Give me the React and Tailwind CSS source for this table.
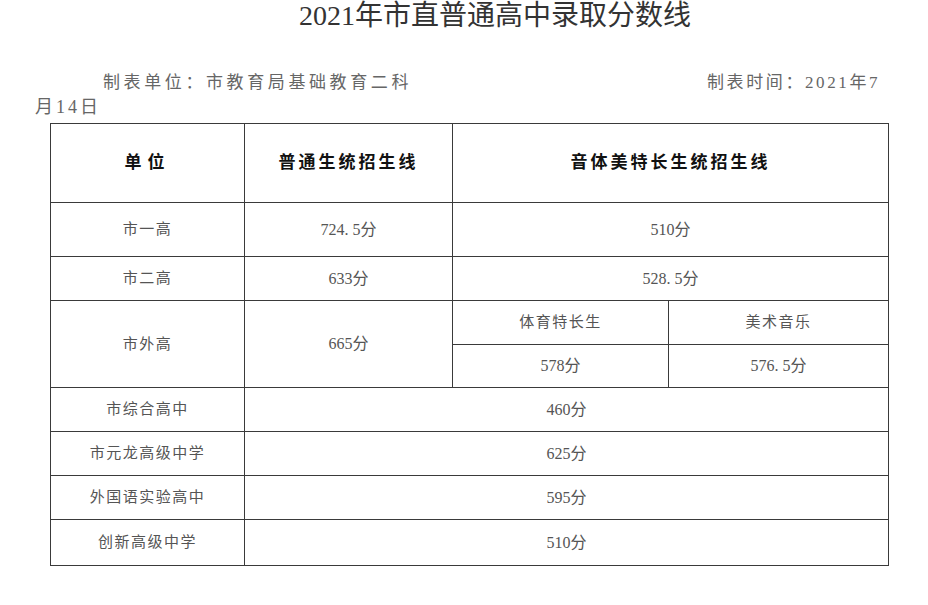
import React from 'react'

const font = { fontFamily: '"Liberation Serif", "Noto Sans CJK SC", serif' }

const cell = 'border-[1.5px] border-[#3a3a3a] text-center align-middle p-0'
const label = 'text-[15px] tracking-[1.5px] text-[#555]'
const score = 'text-[16px] text-[#555]'

const singles = [
  ['市综合高中', '460分', 'h-[44px]'],
  ['市元龙高级中学', '625分', 'h-[44px]'],
  ['外国语实验高中', '595分', 'h-[44px]'],
  ['创新高级中学', '510分', 'h-[46px]'],
]

export default function App() {
  return (
    <div className="w-[928px] h-[605px] bg-white overflow-hidden" style={font}>
      <div className="h-[30px] pt-[2px] leading-[28px] text-center text-[28px] text-[#333] pl-[62px]">
        2021年市直普通高中录取分数线
      </div>

      <div className="mt-[41px] flex h-[24px] leading-[24px] text-[17px] text-[#666]">
        <div className="w-[707px] pl-[103px] tracking-[3.6px]">制表单位：市教育局基础教育二科</div>
        <div className="tracking-[2.6px]">制表时间：2021年7</div>
      </div>
      <div className="h-[24px] leading-[24px] pl-[35px] text-[18px] tracking-[3px] text-[#666]">月14日</div>

      <table className="ml-[50px] mt-[4px] border-collapse w-[838px] table-fixed">
        <colgroup>
          <col className="w-[194px]" />
          <col className="w-[208px]" />
          <col className="w-[216px]" />
          <col className="w-[220px]" />
        </colgroup>
        <tbody>
          <tr className="h-[79px]">
            <td className={`${cell} text-[17px] font-bold tracking-[6px] text-[#111]`}>单位</td>
            <td className={`${cell} text-[17px] font-bold tracking-[3px] text-[#111]`}>普通生统招生线</td>
            <td colSpan={2} className={`${cell} text-[17px] font-bold tracking-[3px] text-[#111]`}>
              音体美特长生统招生线
            </td>
          </tr>
          <tr className="h-[54px]">
            <td className={`${cell} ${label}`}>市一高</td>
            <td className={`${cell} ${score}`}>724. 5分</td>
            <td colSpan={2} className={`${cell} ${score}`}>510分</td>
          </tr>
          <tr className="h-[44px]">
            <td className={`${cell} ${label}`}>市二高</td>
            <td className={`${cell} ${score}`}>633分</td>
            <td colSpan={2} className={`${cell} ${score}`}>528. 5分</td>
          </tr>
          <tr className="h-[44px]">
            <td rowSpan={2} className={`${cell} ${label}`}>市外高</td>
            <td rowSpan={2} className={`${cell} ${score}`}>665分</td>
            <td className={`${cell} ${label}`}>体育特长生</td>
            <td className={`${cell} ${label}`}>美术音乐</td>
          </tr>
          <tr className="h-[43px]">
            <td className={`${cell} ${score}`}>578分</td>
            <td className={`${cell} ${score}`}>576. 5分</td>
          </tr>
          {singles.map(([name, val, h]) => (
            <tr key={name} className={h}>
              <td className={`${cell} ${label}`}>{name}</td>
              <td colSpan={3} className={`${cell} ${score}`}>{val}</td>
            </tr>
          ))}
        </tbody>
      </table>
    </div>
  )
}
